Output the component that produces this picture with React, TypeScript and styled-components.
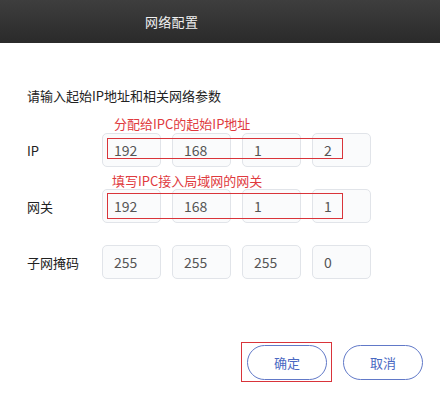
import React from "react";
import styled, { createGlobalStyle } from "styled-components";

const GlobalStyle = createGlobalStyle`
  html, body {
    margin: 0;
    padding: 0;
    background: #ffffff;
  }
  body {
    font-family: "Noto Sans CJK SC", "Liberation Sans", sans-serif;
  }
`;

interface Row {
  label: string;
  values: string[];
  note?: string;
  noteLeft?: number;
  noteTop?: number;
  markTop?: number;
  markHeight?: number;
}

const rows: Row[] = [
  {
    label: "IP",
    values: ["192", "168", "1", "2"],
    note: "分配给IPC的起始IP地址",
    noteLeft: 12,
    noteTop: -18,
    markTop: 5,
    markHeight: 21,
  },
  {
    label: "网关",
    values: ["192", "168", "1", "1"],
    note: "填写IPC接入局域网的网关",
    noteLeft: 10,
    noteTop: -17,
    markTop: 4,
    markHeight: 26,
  },
  {
    label: "子网掩码",
    values: ["255", "255", "255", "0"],
  },
];

export default function App() {
  return (
    <>
      <GlobalStyle />
      <Dialog>
        <Header>
          <Title>网络配置</Title>
        </Header>
        <Body>
          <Intro>请输入起始IP地址和相关网络参数</Intro>
          <Form>
            {rows.map((row) => (
              <FieldRow key={row.label}>
                <Label>{row.label}</Label>
                <Octets>
                  {row.note && (
                    <Note $left={row.noteLeft!} $top={row.noteTop!}>
                      {row.note}
                    </Note>
                  )}
                  {row.values.map((v, i) => (
                    <Octet key={i}>{v}</Octet>
                  ))}
                  {row.markHeight && (
                    <Mark $top={row.markTop!} $height={row.markHeight} />
                  )}
                </Octets>
              </FieldRow>
            ))}
          </Form>
          <Actions>
            <ButtonSlot>
              <PillButton>确定</PillButton>
              <ButtonMark />
            </ButtonSlot>
            <PillButton>取消</PillButton>
          </Actions>
        </Body>
      </Dialog>
    </>
  );
}

const Dialog = styled.div`
  width: 440px;
  height: 394px;
  background: #ffffff;
  display: flex;
  flex-direction: column;
  overflow: hidden;
`;

const Header = styled.div`
  height: 43px;
  flex-shrink: 0;
  display: flex;
  align-items: center;
  padding-left: 145px;
  background: linear-gradient(to bottom, #3e3e3e 0%, #2a2a2a 100%);
`;

const Title = styled.span`
  font-size: 13px;
  color: #f0f0f0;
  letter-spacing: 0.3px;
`;

const Body = styled.div`
  display: flex;
  flex-direction: column;
  padding: 0 17px 0 27px;
`;

const Intro = styled.div`
  margin-top: 44px;
  font-size: 13px;
  line-height: 18px;
  color: #222;
`;

const Form = styled.div`
  margin-top: 28px;
  display: flex;
  flex-direction: column;
  gap: 22px;
`;

const FieldRow = styled.div`
  display: flex;
  align-items: center;
`;

const Label = styled.div`
  width: 75px;
  font-size: 13px;
  color: #222;
`;

const Octets = styled.div`
  position: relative;
  display: flex;
  gap: 11px;
`;

const Octet = styled.div`
  box-sizing: border-box;
  width: 59px;
  height: 34px;
  border: 1px solid #e1e4e9;
  border-radius: 5px;
  background: #fafbfc;
  display: flex;
  align-items: center;
  padding-left: 11px;
  font-size: 14px;
  color: #555;
`;

const Note = styled.span<{ $left: number; $top: number }>`
  position: absolute;
  left: ${(p) => p.$left}px;
  top: ${(p) => p.$top}px;
  font-size: 13px;
  line-height: 17px;
  color: #e03a3e;
  white-space: nowrap;
`;

const Mark = styled.div<{ $top: number; $height: number }>`
  position: absolute;
  left: 5px;
  top: ${(p) => p.$top}px;
  width: 236px;
  height: ${(p) => p.$height}px;
  border: 1.5px solid #d9343a;
  box-sizing: border-box;
  pointer-events: none;
`;

const Actions = styled.div`
  margin-top: 66px;
  display: flex;
  justify-content: flex-end;
  align-items: center;
  gap: 16px;
`;

const ButtonSlot = styled.div`
  position: relative;
`;

const ButtonMark = styled.div`
  position: absolute;
  inset: -3px -5px -2px -6px;
  border: 1.5px solid #d9343a;
  pointer-events: none;
`;

const PillButton = styled.button`
  display: block;
  width: 80px;
  height: 35px;
  padding: 0;
  border: 1px solid #6179c8;
  border-radius: 18px;
  background: #ffffff;
  color: #4a68c2;
  font-family: "Noto Sans CJK SC", "Liberation Sans", sans-serif;
  font-size: 13px;
  cursor: pointer;
`;
